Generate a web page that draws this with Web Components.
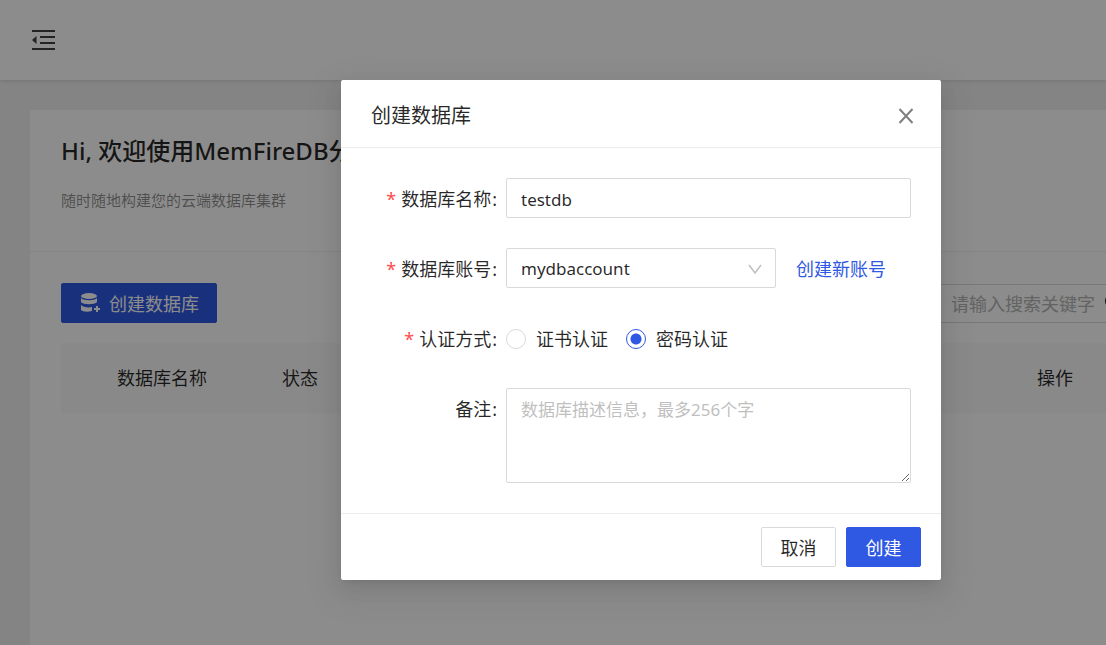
<!DOCTYPE html>
<html lang="zh-CN">
<head>
<meta charset="utf-8">
<meta name="viewport" content="width=device-width, initial-scale=1">
<title>创建数据库</title>
<style>
  html, body { height: 100%; margin: 0; }
  body {
    --primary: #2f58e3;
    --line: #d9d9d9;
    --split: #ececec;
    --text: rgba(0, 0, 0, .85);
    background: #f0f0f0;
    color: var(--text);
    font: 18px/28px "Noto Sans", "Noto Sans CJK SC", sans-serif;
  }
</style>
</head>
<body>
<app-console></app-console>

<script>
const define = (name, html) => customElements.define(name, class extends HTMLElement {
  constructor() {
    super();
    const tpl = document.createElement('template');
    tpl.innerHTML = html;
    this.attachShadow({ mode: 'open' }).append(tpl.content.cloneNode(true));
  }
});

define('ui-button', `
  <style>
    :host { display: inline-flex; }
    button {
      display: flex; align-items: center; justify-content: center; gap: 8px;
      height: 40px; min-width: 75px; padding: 2px 17px 0; box-sizing: border-box;
      border: 1px solid var(--line); border-radius: 2px;
      background: #fff; color: inherit; font: inherit; cursor: pointer;
    }
    :host([primary]) button { background: var(--primary); border-color: var(--primary); color: #fff; }
  </style>
  <button type="button"><slot name="icon"></slot><slot></slot></button>`);

define('app-header', `
  <style>
    :host { display: flex; align-items: center; height: 80px; padding: 0 31px; background: #fff; box-shadow: 0 1px 4px rgba(0, 0, 0, .12); position: relative; }
    button { display: flex; padding: 0; border: 0; background: none; color: rgba(0, 0, 0, .75); cursor: pointer; }
  </style>
  <button type="button" aria-label="收起菜单">
    <svg width="25" height="22" viewBox="0 0 25 22" fill="currentColor">
      <path d="M1 1h23v2H1zM9 7h15v2H9zM9 13h15v2H9zM1 19h23v2H1zM1 11 5.500 7v8z"/>
    </svg>
  </button>`);

define('search-box', `
  <style>
    :host { display: flex; align-items: center; box-sizing: border-box; width: 170px; height: 39px; padding-left: 14px; border: 1px solid var(--line); border-right: 0; background: #fff; overflow: hidden; }
    input { flex: none; width: 154px; padding: 2px 0 0; border: 0; outline: 0; background: none; font: inherit; }
    input::placeholder { color: #b4b4b4; opacity: 1; }
    button { display: flex; padding: 0; border: 0; background: none; color: var(--text); }
  </style>
  <input type="text" placeholder="请输入搜索关键字" aria-label="搜索">
  <button type="button" aria-label="提交搜索">
    <svg width="18" height="18" viewBox="0 0 18 18" fill="none" stroke="currentColor" stroke-width="2"><circle cx="7" cy="7" r="6"/><path d="m12 12 5 5"/></svg>
  </button>`);

define('welcome-banner', `
  <style>
    :host { display: block; padding: 22px 31px 39px; border-bottom: 1px solid #f0f0f0; }
    h1 { margin: 0 0 18px; font-size: 24px; line-height: 38px; font-weight: 500; white-space: nowrap; }
    p { margin: 0; font-size: 15px; line-height: 24px; color: rgba(0, 0, 0, .45); }
  </style>
  <h1><slot name="title"></slot></h1>
  <p><slot></slot></p>`);

define('database-list', `
  <style>
    :host { display: block; padding: 31px 0 31px 31px; }
    .bar { display: flex; justify-content: space-between; align-items: center; margin-bottom: 20px; }
    table { width: 100%; table-layout: fixed; border-collapse: collapse; }
    th { height: 70px; padding: 0; background: #fafafa; font-weight: 400; text-align: center; }
    .name { width: 202px; } .state { width: 74px; } .action { width: 102px; }
  </style>
  <div class="bar">
    <ui-button primary>
      <svg slot="icon" width="22" height="22" viewBox="0 0 22 22" fill="currentColor">
        <ellipse cx="10" cy="3" rx="8" ry="3"/>
        <path d="M2 5c2 3 14 3 16 0v4c-2 3-14 3-16 0z"/>
        <path d="M2 12c2 2 7 3 11 2v4c-4 1-9 1-11-1z"/>
        <path d="M17 13h2v2h2v2h-2v2h-2v-2h-2v-2h2z"/>
      </svg>创建数据库</ui-button>
    <search-box></search-box>
  </div>
  <table>
    <thead><tr><th class="name" scope="col">数据库名称</th><th class="state" scope="col">状态</th><th></th><th class="action" scope="col">操作</th></tr></thead>
  </table>`);

define('form-row', `
  <style>
    :host { display: grid; grid-template-columns: 1fr 3fr; }
    .label { display: flex; justify-content: flex-end; align-items: center; height: 40px; padding: 2px 9px 0 0; box-sizing: border-box; white-space: nowrap; }
    .label::after { content: ":"; margin-left: 1px; }
    :host([required]) .label::before { content: "*"; margin-right: 5px; color: #ff4d4f; }
    .field { display: flex; align-items: center; min-width: 0; }
  </style>
  <div class="label"><slot name="label"></slot></div>
  <div class="field"><slot></slot></div>`);

define('modal-dialog', `
  <style>
    :host {
      display: block; width: 600px; background: #fff; border-radius: 2px;
      box-shadow: 0 4px 8px -5px rgba(0,0,0,.12), 0 8px 20px rgba(0,0,0,.08), 0 11px 35px 10px rgba(0,0,0,.05);
    }
    header { display: flex; justify-content: space-between; align-items: center; height: 68px; padding: 4px 26px 0 30px; box-sizing: border-box; border-bottom: 1px solid var(--split); }
    h2 { margin: 0; font-size: 20px; line-height: 28px; font-weight: 400; }
    header button { display: flex; padding: 0; border: 0; background: none; color: rgba(0, 0, 0, .5); cursor: pointer; }
    .body { padding: 30px; }
    footer { display: flex; justify-content: flex-end; gap: 10px; padding: 13px 20px; border-top: 1px solid var(--split); }
  </style>
  <header>
    <h2><slot name="title"></slot></h2>
    <button type="button" aria-label="关闭"><svg width="18" height="18" viewBox="0 0 18 18" fill="none" stroke="currentColor" stroke-width="2"><path d="m2.500 2 13 14M15.500 2l-13 14"/></svg></button>
  </header>
  <div class="body"><slot></slot></div>
  <footer><slot name="footer"></slot></footer>`);

define('create-database-form', `
  <style>
    :host { display: block; }
    form { display: grid; gap: 30px; }
    input[type=text], select, textarea {
      display: block; box-sizing: border-box; width: 100%; height: 40px; margin: 0; padding: 2px 14px 0;
      border: 1px solid var(--line); border-radius: 2px; background: #fff;
      color: var(--text); font: inherit; font-size: 17px; outline: 0;
    }
    textarea { height: 95px; padding: 7px 14px; resize: vertical; }
    textarea::placeholder { color: #bfbfbf; opacity: 1; }
    .pick { position: relative; width: 270px; margin-right: 20px; }
    select { appearance: none; }
    .pick svg { position: absolute; right: 14px; top: 15px; pointer-events: none; }
    a { padding-top: 2px; color: var(--primary); text-decoration: none; }
    .radio { display: flex; align-items: center; gap: 10px; margin-right: 18px; padding-top: 2px; }
    input[type=radio] { appearance: none; box-sizing: border-box; width: 20px; height: 20px; margin: 0; border: 1px solid var(--line); border-radius: 50%; background: #fff; }
    input[type=radio]:checked { border-color: var(--primary); background: radial-gradient(circle, var(--primary) 5px, #fff 6px); }
  </style>
  <form>
    <form-row required>
      <label slot="label" for="name">数据库名称</label>
      <input type="text" id="name" value="testdb">
    </form-row>
    <form-row required>
      <label slot="label" for="account">数据库账号</label>
      <div class="pick">
        <select id="account"><option>mydbaccount</option></select>
        <svg width="14" height="12" viewBox="0 0 14 12" fill="none" stroke="#bfbfbf" stroke-width="1.500"><path d="m1 2 6 8 6-8"/></svg>
      </div>
      <a href="#new-account">创建新账号</a>
    </form-row>
    <form-row required>
      <span slot="label">认证方式</span>
      <label class="radio"><input type="radio" name="auth">证书认证</label>
      <label class="radio"><input type="radio" name="auth" checked>密码认证</label>
    </form-row>
    <form-row>
      <label slot="label" for="remark">备注</label>
      <textarea id="remark" placeholder="数据库描述信息，最多256个字"></textarea>
    </form-row>
  </form>`);

define('app-console', `
  <style>
    :host { display: flex; flex-direction: column; position: relative; min-height: 100%; }
    main { flex: 1; display: flex; flex-direction: column; padding: 30px 0 0 30px; }
    .card { flex: 1; background: #fff; }
    .mask { position: absolute; inset: 0; display: flex; justify-content: center; align-items: flex-start; padding: 80px 0 0 176px; background: rgba(0, 0, 0, .45); }
  </style>
  <app-header></app-header>
  <main>
    <div class="card">
      <welcome-banner><span slot="title">Hi, 欢迎使用MemFireDB分</span>随时随地构建您的云端数据库集群</welcome-banner>
      <database-list></database-list>
    </div>
  </main>
  <div class="mask">
    <modal-dialog role="dialog" aria-label="创建数据库">
      <span slot="title">创建数据库</span>
      <create-database-form></create-database-form>
      <ui-button slot="footer">取消</ui-button>
      <ui-button slot="footer" primary>创建</ui-button>
    </modal-dialog>
  </div>`);
</script>
</body>
</html>
